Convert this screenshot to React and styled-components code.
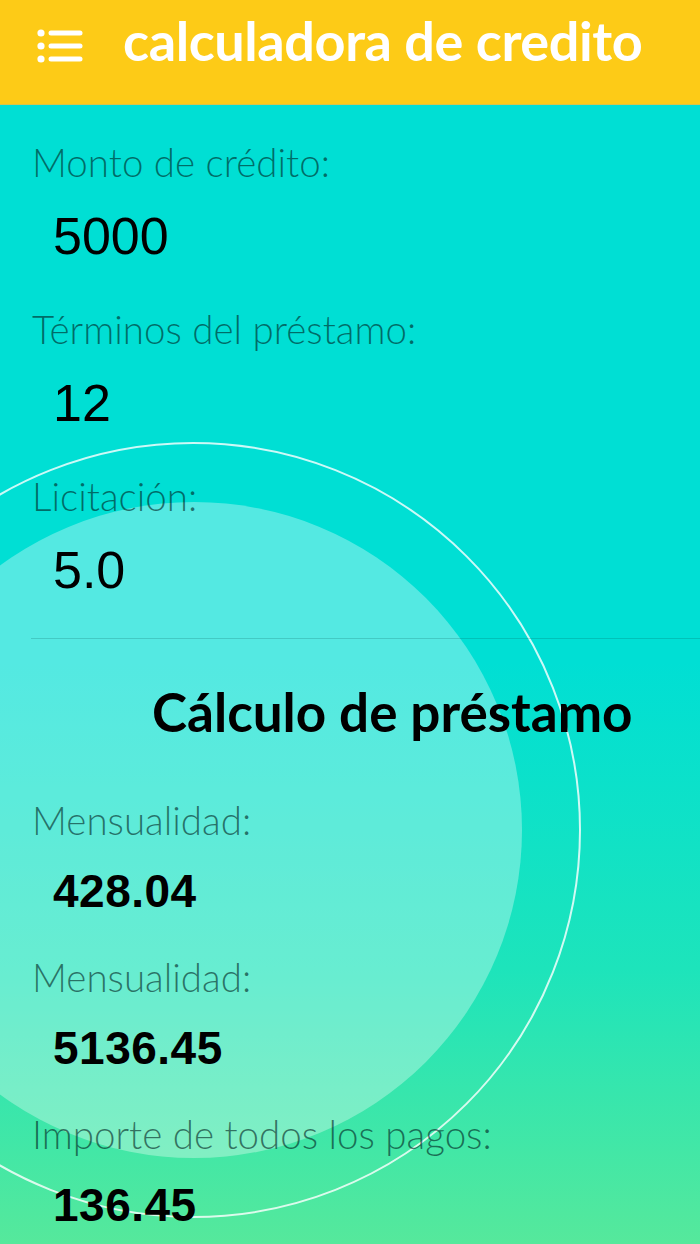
import React from 'react';
import styled, { createGlobalStyle } from 'styled-components';

const GlobalStyle = createGlobalStyle`
  html, body {
    margin: 0;
    padding: 0;
  }
  body {
    font-family: Lato, "Liberation Sans", sans-serif;
  }
`;

const Screen = styled.div`
  position: relative;
  width: 700px;
  min-height: 1244px;
  overflow: hidden;
  background: linear-gradient(180deg, #00dfd4 0%, #00dfd4 52%, #1de4bb 76%, #5ce998 100%);
`;

const Header = styled.header`
  position: relative;
  z-index: 2;
  height: 105px;
  display: flex;
  align-items: center;
  gap: 40px;
  padding: 0 0 10px 37px;
  box-sizing: border-box;
  background: #fdcb17;
  border-bottom: 1px solid #d9c34a;
`;

const Title = styled.h1`
  margin: 0 0 12px 0;
  color: #ffffff;
  font-family: Lato, "Open Sans", sans-serif;
  font-weight: 700;
  font-size: 54px;
  line-height: 66px;
  letter-spacing: -0.4px;
  white-space: nowrap;
`;

const Disc = styled.div`
  position: absolute;
  left: ${p => p.cx - p.r}px;
  top: ${p => p.cy - p.r}px;
  width: ${p => p.r * 2}px;
  height: ${p => p.r * 2}px;
  border-radius: 50%;
  box-sizing: border-box;
  background: ${p => (p.ring ? 'transparent' : 'rgba(255, 255, 255, 0.33)')};
  border: ${p => (p.ring ? '2px solid rgba(255, 255, 255, 0.8)' : 'none')};
  pointer-events: none;
`;

const Content = styled.main`
  position: relative;
  z-index: 1;
  padding: 34px 0 40px 0;
`;

const Section = styled.section`
  padding-left: 32px;
  display: flex;
  flex-direction: column;
  gap: ${p => p.gap}px;
`;

const Field = styled.div`
  display: flex;
  flex-direction: column;
  gap: ${p => p.gap}px;
`;

const Label = styled.div`
  font-family: Lato, "Open Sans", sans-serif;
  font-weight: 300;
  font-size: 38.5px;
  line-height: 46px;
  color: rgba(0, 30, 30, 0.6);
`;

const Value = styled.div`
  padding-left: 21px;
  font-family: "Liberation Sans", Arial, sans-serif;
  font-weight: ${p => (p.bold ? 700 : 400)};
  font-size: ${p => (p.bold ? 46 : 52)}px;
  letter-spacing: ${p => (p.bold ? 0.5 : 0)}px;
  line-height: 58px;
  color: #000;
`;

const Divider = styled.hr`
  margin: 39px 0 0 31px;
  border: none;
  border-top: 1px solid rgba(0, 80, 80, 0.2);
`;

const SectionTitle = styled.h2`
  margin: 43px 0 55px 0;
  padding-left: 152px;
  font-family: Lato, "Open Sans", sans-serif;
  font-weight: 700;
  font-size: 53px;
  line-height: 60px;
  color: #000;
  white-space: nowrap;
`;

const MenuIcon = () => (
  <svg width="46" height="36" viewBox="0 0 46 36">
    <g fill="#fff">
      <circle cx="4" cy="4" r="3.6" />
      <circle cx="4" cy="17" r="3.6" />
      <circle cx="4" cy="30" r="3.6" />
    </g>
    <g stroke="#fff" strokeWidth="5" strokeLinecap="round">
      <line x1="14" y1="4" x2="43" y2="4" />
      <line x1="14" y1="17" x2="43" y2="17" />
      <line x1="14" y1="30" x2="43" y2="30" />
    </g>
  </svg>
);

const inputs = [
  { label: 'Monto de crédito:', value: '5000' },
  { label: 'Términos del préstamo:', value: '12' },
  { label: 'Licitación:', value: '5.0' },
];

const results = [
  { label: 'Mensualidad:', value: '428.04' },
  { label: 'Mensualidad:', value: '5136.45' },
  { label: 'Importe de todos los pagos:', value: '136.45' },
];

export default function App() {
  return (
    <>
      <GlobalStyle />
      <Screen>
        <Disc cx={194} cy={830} r={328} />
        <Disc ring cx={193} cy={830} r={388} />
        <Header>
          <MenuIcon />
          <Title>calculadora de credito</Title>
        </Header>
        <Content>
          <Section gap={41}>
            {inputs.map(f => (
              <Field key={f.label} gap={22}>
                <Label>{f.label}</Label>
                <Value>{f.value}</Value>
              </Field>
            ))}
          </Section>
          <Divider />
          <SectionTitle>Cálculo de préstamo</SectionTitle>
          <Section gap={34}>
            {results.map((f, i) => (
              <Field key={i} gap={19}>
                <Label>{f.label}</Label>
                <Value bold>{f.value}</Value>
              </Field>
            ))}
          </Section>
        </Content>
      </Screen>
    </>
  );
}
